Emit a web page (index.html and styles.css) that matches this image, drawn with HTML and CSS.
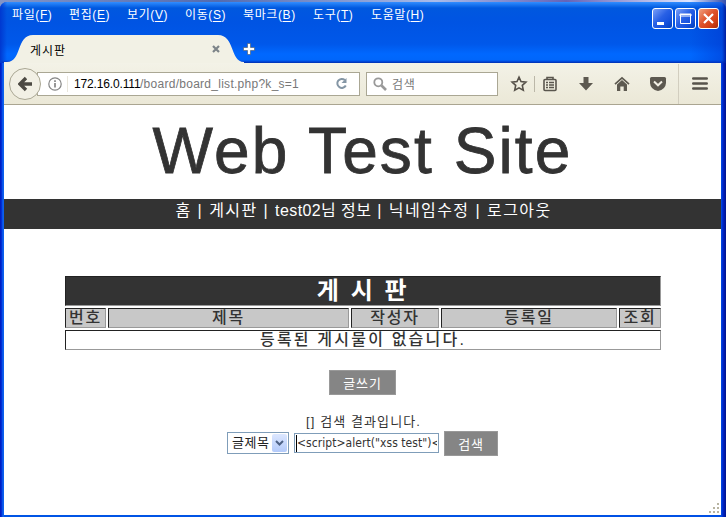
FILE: index.html
```html
<!DOCTYPE html>
<html lang="ko">
<head>
<meta charset="utf-8">
<title>게시판</title>
<link rel="stylesheet" href="styles.css">
</head>
<body>
<div class="window">
  <header class="titlebar">
    <div class="top-row">
      <nav class="menu">
        <span>파일(<u>F</u>)</span><span>편집(<u>E</u>)</span><span>보기(<u>V</u>)</span><span>이동(<u>S</u>)</span><span class="wide">북마크(<u>B</u>)</span><span>도구(<u>T</u>)</span><span>도움말(<u>H</u>)</span>
      </nav>
      <div class="controls">
        <span class="control"><svg width="19" height="19"><path d="M4 13h7v3H4z" fill="#fff"/></svg></span>
        <span class="control"><svg width="19" height="19"><path d="M4.5 5.5h10v9h-10zM4 5h11v2H4z" fill="none" stroke="#fff"/></svg></span>
        <span class="control close"><svg width="19" height="19"><path d="M5 5l9 9M14 5l-9 9" stroke="#fff" stroke-width="2.2"/></svg></span>
      </div>
    </div>
    <div class="tabs">
      <svg class="tab-shape" width="240" height="28"><path d="M0 28V27H3C18 27 12 0 29 0H214C231 0 226 27 240 27V28Z" fill="#f2f1e5"/></svg>
      <span class="tab-title">게시판</span>
      <svg class="tab-close" width="8" height="8"><path d="M1 1l6 6M7 1L1 7" stroke="#7d8488" stroke-width="2.2"/></svg>
      <svg class="tab-new" width="12" height="12"><path d="M4.500 0.500h3v4h4v3h-4v4h-3v-4h-4v-3h4z" fill="#fff" stroke="#456" stroke-width=".6"/></svg>
    </div>
  </header>
  <div class="toolbar">
    <div class="back"><svg width="14" height="16"><path d="M8 2L2 8L8 14M2.500 8H14" fill="none" stroke="#4c4943" stroke-width="3.4"/></svg></div>
    <div class="address">
      <svg width="14" height="14" fill="none" stroke="#858585"><circle cx="7" cy="7" r="6.2" stroke-width="1.2"/><path d="M7 6v4.5M7 3.2v1.7" stroke-width="1.7"/></svg>
      <span class="url"><b>172.16.0.111</b><i>/board/board_list.php?k_s=1</i></span>
      <svg class="reload" width="13" height="13"><path d="M9.8 3A4.5 4.5 0 1 0 10.8 8.5" fill="none" stroke="#8496a5" stroke-width="2"/><path d="M11.5 1V6H6.5z" fill="#8496a5"/></svg>
    </div>
    <div class="search">
      <svg width="14" height="14" fill="none" stroke="#999"><circle cx="5.3" cy="5.3" r="4" stroke-width="1.8"/><path d="M8.5 8.5l4.5 4.5" stroke-width="2.6"/></svg>
      <span>검색</span>
    </div>
    <div class="tools">
      <svg width="18" height="18"><path d="M9 2.2l2 4.4 4.9.5-3.6 3.3 1 4.9L9 12.9l-4.3 2.4 1-4.9L2.1 7.1 7 6.6z" fill="none" stroke="#57524a" stroke-width="1.6"/></svg>
      <span class="divider"></span>
      <svg class="list" width="16" height="18" fill="none" stroke="#5a564e" stroke-width="1.6"><path d="M5 4V2.5h6V4"/><rect x="2" y="4.5" width="12" height="11" rx="1"/><path d="M4 7.5h2M7 7.5h5M4 10h2M7 10h5M4 12.5h2M7 12.5h5" stroke-width="1.3"/></svg>
      <svg class="download" width="16" height="18"><path d="M5.5 2h5v6H15l-7 7.5L1 8h4.5z" fill="#5d5950"/></svg>
      <svg class="home" width="16" height="18"><path d="M1 9.2L8 2.8l7 6.4" fill="none" stroke="#5d5950" stroke-width="1.7"/><path d="M3 9.5L8 5l5 4.5V16H9.7v-4.5H6.3V16H3z" fill="#5d5950"/></svg>
      <svg class="pocket" width="18" height="18"><path d="M2.5 2h13Q17 2 17 3.5V8Q16.5 14.5 9 16Q1.500 14.500 1 8V3.500Q1 2 2.500 2z" fill="#5d5950"/><path d="M5 6.5l4 3.8 4-3.800" fill="none" stroke="#f2efe4" stroke-width="2"/></svg>
      <span class="separator"></span>
      <svg class="burger" width="16" height="18"><path d="M1.300 3.500h13.400M1.300 8.500h13.400M1.300 13.500h13.400" stroke="#57534b" stroke-width="2.600" stroke-linecap="round"/></svg>
    </div>
  </div>
  <main class="page">
    <h1><span>Web Test Site</span></h1>
    <nav class="site-nav"><span>홈</span><span>|</span><span>게시판</span><span>|</span><span class="member">test02님 정보</span><span>|</span><span>닉네임수정</span><span>|</span><span>로그아웃</span></nav>
    <section class="board">
      <div class="cell board-title">게 시 판</div>
      <div class="cell head">번호</div>
      <div class="cell head">제목</div>
      <div class="cell head">작성자</div>
      <div class="cell head">등록일</div>
      <div class="cell head">조회</div>
      <div class="cell empty">등록된 게시물이 없습니다.</div>
    </section>
    <div class="button write">글쓰기</div>
    <p class="result">[] 검색 결과입니다.</p>
    <div class="search-form">
      <div class="select"><span>글제목</span><span class="arrow"><svg width="9" height="7"><path d="M1 1l3.500 3.500L8 1" fill="none" stroke="#4d6185" stroke-width="2"/></svg></span></div>
      <div class="query"><span>&lt;script&gt;alert("xss test")&lt;</span></div>
      <div class="button">검색</div>
    </div>
    <svg class="grip" width="10" height="10" fill="#b8b4a2"><path d="M8 0h2v2H8zM4 4h2v2H4zM8 4h2v2H8zM0 8h2v2H0zM4 8h2v2H4zM8 8h2v2H8z"/></svg>
  </main>
</div>
</body>
</html>
```
FILE: styles.css
```css
* { box-sizing: border-box; }
body {
  margin: 0;
  width: 726px;
  height: 517px;
  overflow: hidden;
  padding-top: 2px;
  background: linear-gradient(90deg, #8295c8, #536bb0 30%, #a8bbea 60%, #6464b8 78%, #dfe6ff 95%, #334fae);
  font-family: "Liberation Sans", "Noto Sans CJK KR", sans-serif;
  font-size: 12px;
  color: #333;
}
svg { display: block; flex: none; }
.window {
  height: 515px;
  padding: 0 5px 2px 4px;
  border-radius: 7px 7px 0 0;
  background: linear-gradient(90deg, #0016bd 0, #0038dc 2px, #166cf5 3px, #0055e5 4px, #0050e5 721px, #0024c8 723px, #00138c 726px);
  overflow: hidden;
}
.titlebar {
  height: 61px;
  margin: 0 -5px 0 -4px;
  padding-left: 4px;
  background: linear-gradient(90deg, #0038d0 0, transparent 7px, transparent 690px, #0036cf80 722px, #001da0 726px), linear-gradient(#328dff 0, #207cf5 2px, #0058df 6px, #0054e3 20px, #0058ea 42px, #0068ff 52px, #0066fb 58px, #003dcc 60px, #002fad 61px);
}
.top-row { display: flex; justify-content: space-between; height: 33px; padding: 5px 7px 0 8px; }
.menu { display: flex; padding-top: 1px; color: #fff; line-height: 15px; letter-spacing: .6px; white-space: nowrap; }
.menu span { width: 58px; }
.menu span:first-child { width: 57px; }
.menu .wide { width: 70px; }
.menu u { text-underline-offset: 2px; }
.controls { display: flex; gap: 2px; padding-top: 1px; }
.control { width: 21px; height: 21px; border: 1px solid #fff; border-radius: 3px; background: linear-gradient(135deg, #7ba0f8, #2860e5 45%, #1752de 70%, #0040bd); }
.control.close { background: linear-gradient(135deg, #f0a080, #df542d 45%, #d64217 70%, #a72b08); }
.tabs { position: relative; display: flex; align-items: center; height: 28px; padding-left: 26px; }
.tab-shape { position: absolute; left: 0; top: 0; }
.tab-title { position: relative; width: 182px; color: #000; letter-spacing: 1px; }
.tab-close { position: relative; }
.tab-new { margin-left: 23px; }
.toolbar { display: flex; align-items: center; height: 42px; padding-left: 5px; border-bottom: 1px solid #aaa591; background: linear-gradient(#f3f2e7, #ebe8d7); }
.back { z-index: 1; display: grid; place-items: center; flex: none; width: 32px; height: 32px; border: 1px solid #aaa794; border-radius: 50%; background: #f2f0e5; }
.address { display: flex; align-items: center; width: 323px; height: 24px; margin-left: -4px; padding-left: 10px; border: 1px solid #aaa794; background: #fff; }
.url { width: 261px; height: 16px; margin-left: 5px; padding-left: 6px; border-left: 1px solid #e9e6dc; line-height: 16px; white-space: nowrap; }
.url b { display: inline-block; width: 66px; color: #000; font-weight: 400; letter-spacing: -.15px; }
.url i { color: #777; font-style: normal; letter-spacing: .27px; }
.reload { margin: 0 0 0 7px; }
.search { display: flex; align-items: center; width: 132px; height: 24px; margin-left: 6px; padding-left: 6px; border: 1px solid #aaa794; background: #fff; color: #777; }
.search span { margin-left: 5px; letter-spacing: .8px; }
.tools { display: flex; align-items: center; height: 100%; margin-left: 12px; }
.divider { width: 1px; height: 16px; margin-left: 6px; background: #bbb7a8; }
.list { margin-left: 7px; }
.download { margin-left: 20px; }
.home { margin-left: 20px; }
.pocket { margin-left: 19px; }
.separator { width: 1px; height: 40px; margin-left: 11px; background: #d2cebf; }
.burger { margin-left: 13px; }
.page { position: relative; height: 410px; background: #fff; }
h1 { display: flex; justify-content: center; height: 94px; margin: 0; font-size: 64px; font-weight: 400; line-height: 92px; letter-spacing: 2.1px; white-space: nowrap; -webkit-text-stroke: .8px #333; }
.site-nav { display: flex; gap: 6px; justify-content: center; height: 30px; padding-left: 2px; background: #333; color: #fff; font-size: 16px; line-height: 24px; white-space: nowrap; letter-spacing: 1.4px; }
.member { letter-spacing: .4px; }
.board { display: grid; grid-template-columns: 41px 241px 88px 176px 42px; grid-template-rows: 30px 20px 20px; gap: 2px; width: 596px; margin: 47px 0 0 61px; }
.cell { border: 1px solid #222; border-right-color: #999; border-bottom-color: #999; font-size: 16px; line-height: 17px; letter-spacing: 1.8px; font-weight: 500; text-align: center; white-space: nowrap; }
.head { background: #c8c8c8; }
.board-title { grid-column: 1 / -1; background: #333; color: #fff; font-size: 24px; line-height: 27px; letter-spacing: 2.6px; font-weight: 700; }
.empty { grid-column: 1 / -1; letter-spacing: 2.2px; }
.button { width: 54px; height: 25px; border: 1px solid #999; background: #858585; color: #fff; font-size: 13px; line-height: 25px; letter-spacing: .8px; text-align: center; }
.write { width: 67px; margin: 20px 0 0 325px; }
.result { height: 18px; margin: 18px 0 0 302px; font-size: 13px; line-height: 18px; letter-spacing: 1.1px; }
.search-form { display: flex; align-items: center; margin-left: 223px; }
.select { display: flex; justify-content: space-between; width: 62px; height: 22px; margin-top: -1px; padding: 1px 1px 1px 4px; border: 1px solid #7f9db9; font-size: 13px; line-height: 18px; letter-spacing: .6px; color: #222; }
.arrow { display: grid; place-items: center; width: 15px; border-radius: 2px; background: linear-gradient(#dce7ff, #b3cafa); }
.query { width: 145px; height: 20px; margin: -1px 5px 0; padding: 1px; border: 1px solid #7f9db9; font-family: "DejaVu Sans Condensed", "DejaVu Sans", sans-serif; font-size: 12px; line-height: 17px; letter-spacing: .05px; white-space: nowrap; }
.query span { display: block; width: 141px; overflow: hidden; border-left: 1px solid #000; }
.grip { position: absolute; right: 2px; bottom: 2px; }
```
